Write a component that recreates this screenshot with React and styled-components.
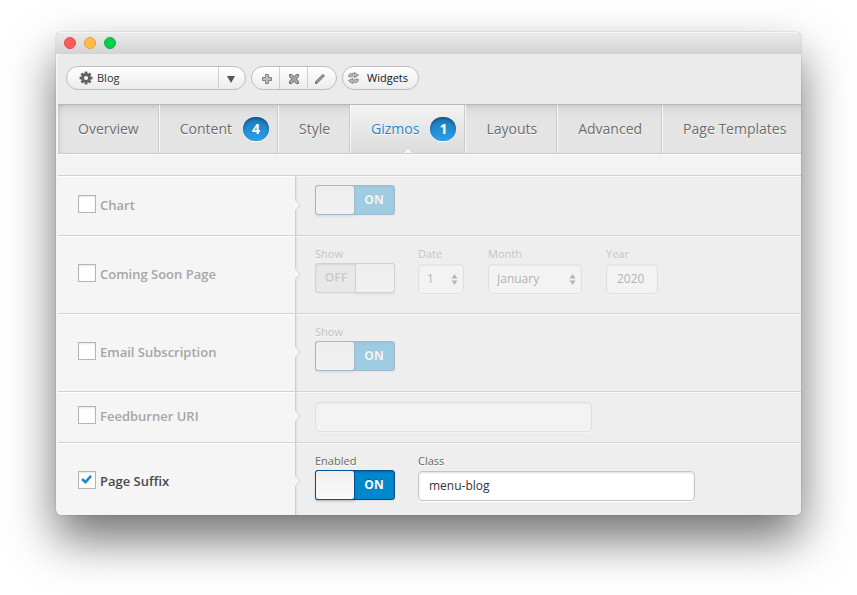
import React from "react";
import styled, { createGlobalStyle, css } from "styled-components";

const GlobalStyle = createGlobalStyle`
  * { box-sizing: border-box; }
  body {
    margin: 0;
    background: #fff;
    font-family: "Open Sans", "Liberation Sans", sans-serif;
    color: #555;
  }
  button, input, select { font-family: inherit; }
`;

const Desktop = styled.div`
  padding: 32px 56px 80px;
`;

const Window = styled.main`
  overflow: hidden;
  border-radius: 5px;
  background: #f4f4f4;
  box-shadow: 0 0 1px rgba(0, 0, 0, 0.6), 0 24px 48px rgba(0, 0, 0, 0.56);
`;

const TitleBar = styled.header`
  display: flex;
  align-items: center;
  gap: 8px;
  height: 22px;
  padding: 0 8px;
  background: linear-gradient(#ebebeb, #d3d3d3);
  box-shadow: inset 0 1px 0 #f6f6f6;
`;

const Light = styled.button`
  width: 12px;
  height: 12px;
  padding: 0;
  border: 1px solid ${(p) => p.$edge};
  border-radius: 50%;
  background: ${(p) => p.$fill};
`;

const Content = styled.div`
  padding-left: 2px;
`;

const Toolbar = styled.div`
  display: flex;
  align-items: center;
  gap: 5px;
  height: 50px;
  padding: 0 8px 2px;
  background: #ebebeb;
`;

const pill = css`
  height: 24px;
  border: 1px solid #bdbdbd;
  border-radius: 12px;
  background: linear-gradient(#fff, #ececec);
  color: #333;
  font-size: 11px;
`;

const TemplatePicker = styled.div`
  position: relative;
  width: 180px;
`;

const TemplateSelect = styled.select`
  ${pill}
  display: block;
  width: 100%;
  padding: 0 28px 2px 30px;
  appearance: none;
`;

const GearSlot = styled.span`
  position: absolute;
  left: 13px;
  top: 5px;
  display: flex;
  pointer-events: none;
`;

const ArrowSlot = styled.span`
  position: absolute;
  right: 1px;
  top: 1px;
  bottom: 1px;
  width: 27px;
  display: flex;
  align-items: center;
  padding-top: 2px;
  padding-left: 8px;
  border-left: 1px solid #cfcfcf;
  pointer-events: none;
`;

const ButtonGroup = styled.div`
  ${pill}
  display: flex;
  overflow: hidden;
`;

const IconButton = styled.button`
  display: flex;
  align-items: center;
  justify-content: center;
  width: 28px;
  padding: 1px 0 0 2px;
  border: 0;
  border-right: 1px solid #cfcfcf;
  background: none;
  &:nth-child(2) { padding-left: 0; }
  &:last-child {
    padding: 1px 4px 0 0;
    border-right: 0;
  }
`;

const WidgetsButton = styled.button`
  ${pill}
  display: flex;
  align-items: center;
  gap: 7px;
  padding: 0 10px 1px 4px;
  color: #111;
`;

const TabBar = styled.nav`
  display: flex;
  overflow: hidden;
  border-top: 1px solid #b9b9b9;
  border-bottom: 1px solid #cbcbcb;
  background: linear-gradient(#cdcdcd, #dbdbdb 4px, #e4e4e4 12px, #e4e4e4);
  box-shadow: inset 4px 0 6px -4px rgba(0, 0, 0, 0.18);
`;

const Tab = styled.a`
  position: relative;
  display: flex;
  flex: none;
  align-items: center;
  gap: 11px;
  height: 48px;
  padding: 0 ${(p) => (p.$badged ? 8 : 19)}px 1px 20px;
  border-right: 1px solid #c9c9c9;
  color: #6c6c6c;
  font-size: 14px;
  text-decoration: none;
  text-shadow: 0 1px 0 #fff;
  & + & { border-left: 1px solid #f8f8f8; }
  &:last-child { border-right: 0; }
  ${(p) =>
    p.$active &&
    css`
      color: #2a85c4;
      background: linear-gradient(#f3f3f3, #dcdcdc);
    `}
`;

const Notch = styled.svg`
  position: absolute;
  left: 50%;
  bottom: -1px;
  margin-left: -6px;
`;

const Badge = styled.span`
  display: flex;
  align-items: center;
  justify-content: center;
  width: 26px;
  height: 24px;
  border-radius: 12px;
  background: linear-gradient(#1b78b9, #2d9fe8);
  box-shadow: inset 0 2px 3px rgba(0, 40, 80, 0.45), 0 1px 0 #fff;
  color: #fff;
  font-weight: 700;
  text-shadow: none;
`;

const Spacer = styled.div`
  height: 22px;
  border-bottom: 1px solid #d0d0d0;
  background: #f3f3f3;
  box-shadow: inset 0 1px 0 #fff;
`;

const Row = styled.section`
  display: flex;
  border-bottom: 1px solid #d2d2d2;
  &:last-child { border-bottom: 0; margin-bottom: -5px; }
`;

const RowLabel = styled.label`
  position: relative;
  display: flex;
  flex: none;
  align-items: center;
  gap: 4px;
  width: 238px;
  padding: 0 0 2px 20px;
  border-right: 1px solid #cfcfcf;
  background: #f5f5f5;
  box-shadow: inset 0 1px 0 #fff;
  color: ${(p) => (p.$on ? "#4a4a4a" : "#a6a6a6")};
  font-size: 13px;
  font-weight: 600;
`;

const Pointer = styled.svg`
  position: absolute;
  right: -6px;
  top: 50%;
  margin-top: -7px;
`;

const CheckWrap = styled.span`
  display: grid;
  margin-bottom: 2px;
  & > * { grid-area: 1 / 1; }
  & > svg { pointer-events: none; }
`;

const Check = styled.input`
  width: 18px;
  height: 18px;
  margin: 0;
  border: 1px solid #b5b5b5;
  background: #fff;
  box-shadow: inset 0 1px 2px rgba(0, 0, 0, 0.1);
  appearance: none;
`;

const Fields = styled.div`
  display: flex;
  flex: 1;
  align-items: flex-start;
  gap: 24px;
  min-width: 0;
  padding: 9px 19px ${(p) => (p.$compact ? 10 : 19)}px;
  background: #eee;
  box-shadow: inset 0 1px 0 #f8f8f8, inset 3px 0 3px -3px rgba(0, 0, 0, 0.12);
`;

const Field = styled.label`
  display: block;
  width: ${(p) => p.$width}px;
  opacity: ${(p) => (p.$dim ? 0.33 : 1)};
`;

const Caption = styled.span`
  display: block;
  height: 18px;
  color: #666;
  font-size: 11px;
  line-height: 18px;
  text-shadow: 0 1px 0 #fff;
`;

const control = css`
  display: block;
  width: 100%;
  height: 30px;
  margin: 1px 0 0;
  padding: 0 10px 2px;
  border: 1px solid #c4c4c4;
  border-radius: 4px;
  background: #fff;
  box-shadow: inset 0 1px 2px rgba(0, 0, 0, 0.12), 0 1px 0 #fff;
  color: #333;
  font-size: 12px;
  opacity: 1;
  appearance: none;
`;

const TextBox = styled.input`
  ${control}
`;

const Select = styled.select`
  ${control}
  padding: 0 8px 2px;
`;

const SelectWrap = styled.span`
  position: relative;
  display: block;
  & > svg {
    position: absolute;
    right: 6px;
    top: 10px;
    pointer-events: none;
  }
`;

const Switch = styled.span`
  position: relative;
  display: flex;
  flex-direction: ${(p) => (p.$on ? "row" : "row-reverse")};
  width: 80px;
  height: 30px;
  margin-bottom: 1px;
  border: 1px solid ${(p) => (p.$on ? "#04508c" : "#999")};
  border-radius: 3px;
  background: ${(p) => (p.$on ? "#0088cc" : "#ddd")};
  box-shadow: inset 0 1px 2px rgba(0, 0, 0, 0.25), 0 1px 1px rgba(0, 0, 0, 0.08);
`;

const SwitchInput = styled.input`
  position: absolute;
  inset: 0;
  width: 100%;
  height: 100%;
  margin: 0;
  opacity: 0;
`;

const Knob = styled.span`
  width: 40px;
  margin: -1px;
  border: 1px solid ${(p) => (p.$on ? "#04508c" : "#999")};
  border-radius: 3px;
  background: linear-gradient(#efefef, #fafafa);
  box-shadow: 0 2px 2px rgba(0, 0, 0, 0.12);
`;

const SwitchText = styled.span`
  flex: 1;
  color: ${(p) => (p.$on ? "#fff" : "#888")};
  font-size: 12px;
  font-weight: 700;
  line-height: 28px;
  text-align: center;
  text-shadow: 0 ${(p) => (p.$on ? "-1px 0 rgba(0, 0, 0, 0.3)" : "1px 0 #fff")};
`;

const GearIcon = () => (
  <svg width="14" height="14" viewBox="0 0 14 14" aria-hidden="true">
    <g fill="#606060">
      {[0, 45, 90, 135].map((a) => (
        <rect key={a} x="5.6" y="0.6" width="2.8" height="12.8" transform={`rotate(${a} 7 7)`} />
      ))}
      <circle cx="7" cy="7" r="4.7" />
    </g>
    <circle cx="7" cy="7" r="2.1" fill="#fafafa" />
  </svg>
);

const PlusIcon = () => (
  <svg width="12" height="12" viewBox="0 0 12 12" aria-hidden="true">
    <path d="M4.5 1.5h3v3h3v3h-3v3h-3v-3h-3v-3h3z" fill="#bcbcbc" stroke="#808080" />
  </svg>
);

const CrossIcon = () => (
  <svg width="12" height="12" viewBox="0 0 12 12" aria-hidden="true">
    <path
      d="M1.5 1.5h2.2L6 3.7l2.3-2.2h2.2v2.2L8.3 6l2.2 2.3v2.2H8.3L6 8.3l-2.3 2.2H1.5V8.3L3.7 6 1.5 3.7z"
      fill="#a5a5a5"
      stroke="#6c6c6c"
    />
  </svg>
);

const PencilIcon = () => (
  <svg width="12" height="12" viewBox="0 0 12 12" aria-hidden="true">
    <path d="M1.5 10.5l.5-2.3 6.3-6.3q.8-.6 1.5.1.7.8.1 1.5l-6.2 6.3z" fill="#999" stroke="#777" />
    <path d="M1 11l.6-2.2 1.6 1.6z" fill="#666" />
  </svg>
);

const RefreshIcon = () => (
  <svg width="13" height="12" viewBox="0 0 13 12" aria-hidden="true">
    <g fill="#bbb" stroke="#777" strokeWidth="0.8" strokeLinejoin="round">
      <path d="M1.5 4.6q0-2.9 3-3.2h3V.4l4 2.9-4 2.5V4.1H5Q3.900 4.200 3.900 5z" />
      <path d="M11.500 7.400q0 2.900-3 3.200h-3v1L1.500 8.700l4-2.500v1.700H8q1.100-.1 1.100-.9z" />
    </g>
  </svg>
);

const DownIcon = () => (
  <svg width="8" height="8" viewBox="0 0 8 8" aria-hidden="true">
    <path d="M0 1h8L4 8z" fill="#555" />
  </svg>
);

const UpDownIcon = () => (
  <svg width="7" height="11" viewBox="0 0 7 11" aria-hidden="true">
    <path d="M3.5 0L6.5 4.5h-6zM3.5 11l3-4.5h-6z" fill="#444" />
  </svg>
);

function Toggle({ label, caption, on, dim }) {
  return (
    <Field $width={79} $dim={dim}>
      {caption && <Caption>{caption}</Caption>}
      <Switch $on={on}>
        <Knob $on={on} />
        <SwitchText $on={on}>{on ? "ON" : "OFF"}</SwitchText>
        <SwitchInput type="checkbox" role="switch" aria-label={label} defaultChecked={on} disabled={dim} />
      </Switch>
    </Field>
  );
}

function Dropdown({ caption, width, value }) {
  return (
    <Field $width={width} $dim>
      <Caption>{caption}</Caption>
      <SelectWrap>
        <Select disabled defaultValue={value}>
          <option>{value}</option>
        </Select>
        <UpDownIcon />
      </SelectWrap>
    </Field>
  );
}

function GizmoRow({ name, on, compact, children }) {
  return (
    <Row>
      <RowLabel $on={on}>
        <CheckWrap>
          <Check type="checkbox" defaultChecked={on} />
          {on && (
            <svg width="18" height="18" viewBox="0 0 18 18" aria-hidden="true">
              <path d="M4 8l3.5 3.2L13 4.8" fill="none" stroke="#1e8cc8" strokeWidth="2.6" />
            </svg>
          )}
        </CheckWrap>
        {name}
        <Pointer width="6" height="12" viewBox="0 0 6 12" aria-hidden="true">
          <path d="M0 0l5.5 6L0 12z" fill="#f5f5f5" />
          <path d="M0 .5L5.3 6 0 11.5" fill="none" stroke="#cfcfcf" />
        </Pointer>
      </RowLabel>
      <Fields $compact={compact}>{children}</Fields>
    </Row>
  );
}

const tabs = [
  { name: "Overview" },
  { name: "Content", count: 4 },
  { name: "Style" },
  { name: "Gizmos", count: 1, active: true },
  { name: "Layouts" },
  { name: "Advanced" },
  { name: "Page Templates" },
];

export default function App() {
  return (
    <Desktop>
      <GlobalStyle />
      <Window>
        <TitleBar>
          <Light aria-label="Close" $fill="#ff5b5b" $edge="#e2484a" />
          <Light aria-label="Minimize" $fill="#ffbe43" $edge="#dfa13a" />
          <Light aria-label="Zoom" $fill="#00d04b" $edge="#12ac3d" />
        </TitleBar>
        <Content>
          <Toolbar>
            <TemplatePicker>
              <TemplateSelect aria-label="Template">
                <option>Blog</option>
              </TemplateSelect>
              <GearSlot><GearIcon /></GearSlot>
              <ArrowSlot><DownIcon /></ArrowSlot>
            </TemplatePicker>
            <ButtonGroup>
              <IconButton aria-label="Add"><PlusIcon /></IconButton>
              <IconButton aria-label="Delete"><CrossIcon /></IconButton>
              <IconButton aria-label="Edit"><PencilIcon /></IconButton>
            </ButtonGroup>
            <WidgetsButton>
              <RefreshIcon />
              Widgets
            </WidgetsButton>
          </Toolbar>
          <TabBar>
            {tabs.map((t) => (
              <Tab key={t.name} href="#" $active={t.active} $badged={!!t.count}>
                {t.name}
                {t.count && <Badge>{t.count}</Badge>}
                {t.active && (
                  <Notch width="12" height="7" viewBox="0 0 12 7" aria-hidden="true">
                    <path d="M0 7l6-6 6 6z" fill="#f5f5f5" />
                    <path d="M0 6.5l6-6 6 6" fill="none" stroke="#cbcbcb" />
                  </Notch>
                )}
              </Tab>
            ))}
          </TabBar>
          <Spacer />
          <div>
            <GizmoRow name="Chart">
              <Toggle label="Chart" on dim />
            </GizmoRow>
            <GizmoRow name="Coming Soon Page">
              <Toggle label="Show coming soon page" caption="Show" dim />
              <Dropdown caption="Date" width={46} value="1" />
              <Dropdown caption="Month" width={94} value="January" />
              <Field $width={52} $dim>
                <Caption>Year</Caption>
                <TextBox disabled defaultValue="2020" />
              </Field>
            </GizmoRow>
            <GizmoRow name="Email Subscription">
              <Toggle label="Show email subscription" caption="Show" on dim />
            </GizmoRow>
            <GizmoRow name="Feedburner URI" compact>
              <Field $width={277} $dim>
                <TextBox disabled aria-label="Feedburner URI" />
              </Field>
            </GizmoRow>
            <GizmoRow name="Page Suffix" on>
              <Toggle label="Page suffix enabled" caption="Enabled" on />
              <Field $width={277}>
                <Caption>Class</Caption>
                <TextBox defaultValue="menu-blog" />
              </Field>
            </GizmoRow>
          </div>
        </Content>
      </Window>
    </Desktop>
  );
}
